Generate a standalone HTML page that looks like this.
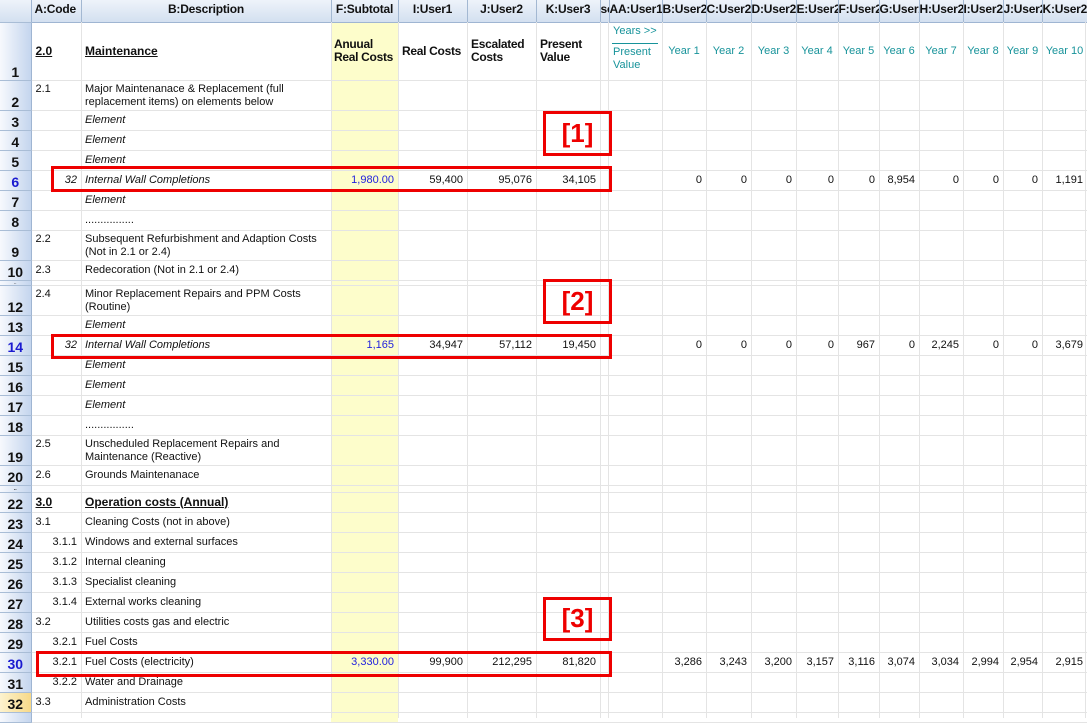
<!DOCTYPE html>
<html><head><meta charset="utf-8">
<style>
*{box-sizing:border-box;margin:0;padding:0}
body{width:1087px;height:718px;overflow:hidden;background:#fff;position:relative;font-family:"Liberation Sans",Arial,sans-serif}
table{position:absolute;left:0;top:0;border-collapse:collapse;table-layout:fixed;width:1087px}
td{padding:0 4px;border-bottom:1px solid #e4e4e4;font-size:11px;white-space:nowrap;overflow:hidden;vertical-align:middle;color:#111;line-height:13px}
td.f{background:#fdfdcb}
td.r{text-align:right}
td.i{font-style:italic}
td.t{vertical-align:top;padding-top:2px}
td.b{font-weight:bold;text-decoration:underline}
td.h{font-weight:bold;white-space:normal;letter-spacing:-0.3px}
td.y{color:#17939a;text-align:center;padding:0}
td.bl{color:#2222dd}
td.w{white-space:normal}
th{background:linear-gradient(to right,#f7f9fd,#c4d5ee);border-bottom:1px solid #a9bdd6;border-right:1px solid #9fb5d2;font-size:14px;font-weight:bold;vertical-align:bottom;text-align:center;color:#111;padding-bottom:0;line-height:16px}
th.sel{background:linear-gradient(to right,#fdf3cf,#f7d989)}
th.bn{color:#1a1ad0}
tr.hd td{background:linear-gradient(#eef3fa,#d3e0f0);border-right:1px solid #a3b8d2;border-bottom:1px solid #9fb5d2;font-weight:bold;font-size:12px;text-align:center;padding:0;color:#111;vertical-align:top;padding-top:3px;letter-spacing:-0.2px}
tr.hd th{background:linear-gradient(#eef3fa,#d3e0f0)}
.vl{position:absolute;top:22px;width:1px;height:696px;background:#e4e4e4}
.box{position:absolute;border:3px solid #ee0000}
.lab{position:absolute;color:#ee0000;font-weight:bold;font-size:26px;text-align:center;line-height:38px}
</style></head><body>
<table>
<colgroup>
<col style="width:31px"><col style="width:50px"><col style="width:250px"><col style="width:67px"><col style="width:69px"><col style="width:69px"><col style="width:64px"><col style="width:9px"><col style="width:53px"><col style="width:44px"><col style="width:45px"><col style="width:45px"><col style="width:42px"><col style="width:41px"><col style="width:40px"><col style="width:44px"><col style="width:40px"><col style="width:39px"><col style="width:45px">
</colgroup>
<tr class="hd" style="height:22px"><th></th><td style="text-align:left;padding-left:3px">A:Code</td><td>B:Description</td><td>F:Subtotal</td><td>I:User1</td><td>J:User2</td><td>K:User3</td><td>se</td><td>AA:User1</td><td>B:User2</td><td>C:User2</td><td>D:User2</td><td>E:User2</td><td>F:User2</td><td>G:User2</td><td>H:User2</td><td>I:User2</td><td>J:User2</td><td>K:User2</td></tr>
<tr style="height:58px"><th>1</th><td class="b" style="font-size:12px">2.0</td><td class="b" style="font-size:12px">Maintenance</td><td class="f h" style="font-size:12px;padding:0 1px 0 3px">Anuual Real&nbsp;Costs</td><td class="h" style="font-size:12px">Real Costs</td><td class="h" style="font-size:12px">Escalated Costs</td><td class="h" style="font-size:12px">Present Value</td><td></td>
<td style="color:#17939a;white-space:normal;vertical-align:top;padding:2px 4px 0 4px;line-height:13px">Years &gt;&gt;<div style="border-top:1px solid #17939a;margin:5px 0 2px -1px;width:46px"></div>Present Value</td>
<td class="y">Year 1</td><td class="y">Year 2</td><td class="y">Year 3</td><td class="y">Year 4</td><td class="y">Year 5</td><td class="y">Year 6</td><td class="y">Year 7</td><td class="y">Year 8</td><td class="y">Year 9</td><td class="y">Year 10</td></tr>
<tr style="height:30px"><th>2</th><td class="t">2.1</td><td class="w t">Major Maintenanace &amp; Replacement (full replacement items) on elements below</td><td class="f"></td><td></td><td></td><td></td><td colspan="12"></td></tr>
<tr style="height:20px"><th>3</th><td></td><td class="i">Element</td><td class="f"></td><td></td><td></td><td></td><td colspan="12"></td></tr>
<tr style="height:20px"><th>4</th><td></td><td class="i">Element</td><td class="f"></td><td></td><td></td><td></td><td colspan="12"></td></tr>
<tr style="height:20px"><th>5</th><td></td><td class="i">Element</td><td class="f"></td><td></td><td></td><td></td><td colspan="12"></td></tr>
<tr style="height:20px"><th class="bn">6</th><td class="r i">32</td><td class="i">Internal Wall Completions</td><td class="f r bl">1,980.00</td><td class="r">59,400</td><td class="r">95,076</td><td class="r">34,105</td><td colspan="2"></td><td class="r">0</td><td class="r">0</td><td class="r">0</td><td class="r">0</td><td class="r">0</td><td class="r">8,954</td><td class="r">0</td><td class="r">0</td><td class="r">0</td><td class="r">1,191</td></tr>
<tr style="height:20px"><th>7</th><td></td><td class="i">Element</td><td class="f"></td><td></td><td></td><td></td><td colspan="12"></td></tr>
<tr style="height:20px"><th>8</th><td></td><td>................</td><td class="f"></td><td></td><td></td><td></td><td colspan="12"></td></tr>
<tr style="height:30px"><th>9</th><td class="t">2.2</td><td class="w t">Subsequent Refurbishment and Adaption Costs (Not in 2.1 or 2.4)</td><td class="f"></td><td></td><td></td><td></td><td colspan="12"></td></tr>
<tr style="height:20px"><th>10</th><td>2.3</td><td>Redecoration (Not in 2.1 or 2.4)</td><td class="f"></td><td></td><td></td><td></td><td colspan="12"></td></tr>
<tr style="height:5px"><th style="font-size:4px;line-height:4px">..</th><td></td><td></td><td class="f"></td><td></td><td></td><td></td><td colspan="12"></td></tr>
<tr style="height:30px"><th>12</th><td class="t">2.4</td><td class="w t">Minor Replacement Repairs and PPM Costs (Routine)</td><td class="f"></td><td></td><td></td><td></td><td colspan="12"></td></tr>
<tr style="height:20px"><th>13</th><td></td><td class="i">Element</td><td class="f"></td><td></td><td></td><td></td><td colspan="12"></td></tr>
<tr style="height:20px"><th class="bn">14</th><td class="r i">32</td><td class="i">Internal Wall Completions</td><td class="f r bl">1,165</td><td class="r">34,947</td><td class="r">57,112</td><td class="r">19,450</td><td colspan="2"></td><td class="r">0</td><td class="r">0</td><td class="r">0</td><td class="r">0</td><td class="r">967</td><td class="r">0</td><td class="r">2,245</td><td class="r">0</td><td class="r">0</td><td class="r">3,679</td></tr>
<tr style="height:20px"><th>15</th><td></td><td class="i">Element</td><td class="f"></td><td></td><td></td><td></td><td colspan="12"></td></tr>
<tr style="height:20px"><th>16</th><td></td><td class="i">Element</td><td class="f"></td><td></td><td></td><td></td><td colspan="12"></td></tr>
<tr style="height:20px"><th>17</th><td></td><td class="i">Element</td><td class="f"></td><td></td><td></td><td></td><td colspan="12"></td></tr>
<tr style="height:20px"><th>18</th><td></td><td>................</td><td class="f"></td><td></td><td></td><td></td><td colspan="12"></td></tr>
<tr style="height:30px"><th>19</th><td class="t">2.5</td><td class="w t">Unscheduled Replacement Repairs and Maintenance (Reactive)</td><td class="f"></td><td></td><td></td><td></td><td colspan="12"></td></tr>
<tr style="height:20px"><th>20</th><td>2.6</td><td>Grounds Maintenanace</td><td class="f"></td><td></td><td></td><td></td><td colspan="12"></td></tr>
<tr style="height:7px"><th style="font-size:5px;line-height:5px">..</th><td></td><td></td><td class="f"></td><td></td><td></td><td></td><td colspan="12"></td></tr>
<tr style="height:20px"><th>22</th><td class="b" style="font-size:12px">3.0</td><td class="b" style="font-size:12px">Operation costs (Annual)</td><td class="f"></td><td></td><td></td><td></td><td colspan="12"></td></tr>
<tr style="height:20px"><th>23</th><td>3.1</td><td>Cleaning Costs (not in above)</td><td class="f"></td><td></td><td></td><td></td><td colspan="12"></td></tr>
<tr style="height:20px"><th>24</th><td class="r">3.1.1</td><td>Windows and external surfaces</td><td class="f"></td><td></td><td></td><td></td><td colspan="12"></td></tr>
<tr style="height:20px"><th>25</th><td class="r">3.1.2</td><td>Internal cleaning</td><td class="f"></td><td></td><td></td><td></td><td colspan="12"></td></tr>
<tr style="height:20px"><th>26</th><td class="r">3.1.3</td><td>Specialist cleaning</td><td class="f"></td><td></td><td></td><td></td><td colspan="12"></td></tr>
<tr style="height:20px"><th>27</th><td class="r">3.1.4</td><td>External works cleaning</td><td class="f"></td><td></td><td></td><td></td><td colspan="12"></td></tr>
<tr style="height:20px"><th>28</th><td>3.2</td><td>Utilities costs gas and electric</td><td class="f"></td><td></td><td></td><td></td><td colspan="12"></td></tr>
<tr style="height:20px"><th>29</th><td class="r">3.2.1</td><td>Fuel Costs</td><td class="f"></td><td></td><td></td><td></td><td colspan="12"></td></tr>
<tr style="height:20px"><th class="bn">30</th><td class="r">3.2.1</td><td>Fuel Costs (electricity)</td><td class="f r bl">3,330.00</td><td class="r">99,900</td><td class="r">212,295</td><td class="r">81,820</td><td colspan="2"></td><td class="r">3,286</td><td class="r">3,243</td><td class="r">3,200</td><td class="r">3,157</td><td class="r">3,116</td><td class="r">3,074</td><td class="r">3,034</td><td class="r">2,994</td><td class="r">2,954</td><td class="r">2,915</td></tr>
<tr style="height:20px"><th>31</th><td class="r">3.2.2</td><td>Water and Drainage</td><td class="f"></td><td></td><td></td><td></td><td colspan="12"></td></tr>
<tr style="height:20px"><th class="sel">32</th><td>3.3</td><td>Administration Costs</td><td class="f"></td><td></td><td></td><td></td><td colspan="12"></td></tr>
<tr style="height:10px"><th></th><td></td><td></td><td class="f"></td><td></td><td></td><td></td><td colspan="12"></td></tr>
</table>
<div class="vl" style="left:81px"></div><div class="vl" style="left:331px"></div><div class="vl" style="left:398px"></div><div class="vl" style="left:467px"></div><div class="vl" style="left:536px"></div><div class="vl" style="left:600px"></div><div class="vl" style="left:608px"></div><div class="vl" style="left:662px"></div><div class="vl" style="left:706px"></div><div class="vl" style="left:751px"></div><div class="vl" style="left:796px"></div><div class="vl" style="left:838px"></div><div class="vl" style="left:879px"></div><div class="vl" style="left:919px"></div><div class="vl" style="left:963px"></div><div class="vl" style="left:1003px"></div><div class="vl" style="left:1042px"></div><div class="vl" style="left:1085px"></div>

<div class="box" style="left:543px;top:111px;width:69px;height:45px"></div><div class="lab" style="left:543px;top:114px;width:69px">[1]</div>
<div class="box" style="left:51px;top:166px;width:561px;height:26px"></div>
<div class="box" style="left:543px;top:279px;width:69px;height:45px"></div><div class="lab" style="left:543px;top:282px;width:69px">[2]</div>
<div class="box" style="left:51px;top:334px;width:561px;height:25px"></div>
<div class="box" style="left:543px;top:597px;width:69px;height:44px"></div><div class="lab" style="left:543px;top:599px;width:69px">[3]</div>
<div class="box" style="left:36px;top:651px;width:576px;height:26px"></div>
</body></html>
